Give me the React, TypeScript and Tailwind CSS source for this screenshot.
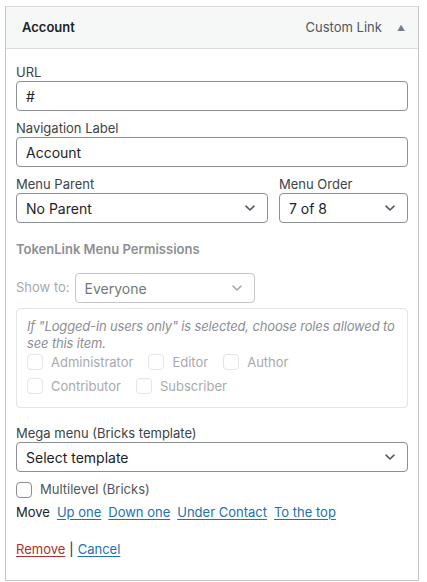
import type { ReactNode } from "react";

function Chevron({ color = "#50575e" }: { color?: string }) {
  return (
    <svg width="12" height="12" viewBox="0 0 12 12" fill="none">
      <path d="M2 4.2 6 8l4-3.8" stroke={color} strokeWidth="1.6" strokeLinecap="round" strokeLinejoin="round" />
    </svg>
  );
}

function FakeSelect({ value, className = "", muted = false }: { value: string; className?: string; muted?: boolean }) {
  return (
    <div
      className={`h-[30px] flex items-center justify-between pl-[9px] pr-[11px] rounded-[4px] border text-[14px] ${
        muted ? "border-[#c3c4c7] text-[#72777c]" : "border-[#8c8f94] text-[#1d2327]"
      } ${className}`}
    >
      <span>{value}</span>
      <Chevron color={muted ? "#a7aaad" : "#50575e"} />
    </div>
  );
}

function Label({ children }: { children: ReactNode }) {
  return <div className="h-[18px] leading-[18px] text-[13px] text-[#3c434a]">{children}</div>;
}

function RoleBox({ label }: { label: string }) {
  return (
    <label className="flex items-center gap-2 h-4 leading-4">
      <span className="w-4 h-4 rounded-[4px] border border-[#e2e4e7] bg-white" />
      <span>{label}</span>
    </label>
  );
}

function MoveLink({ children }: { children: ReactNode }) {
  return <a className="text-[#2271b1] underline underline-offset-2 cursor-pointer">{children}</a>;
}

export default function App() {
  return (
    <div className="min-h-screen bg-white pt-[6px] pl-[5px] pr-[8px] text-[13px]" style={{ fontFamily: "Inter, 'Liberation Sans', sans-serif" }}>
      <div className="border border-[#c3c4c7] border-t-[#dcdcde] w-[414px]">
        <div className="h-[42px] bg-[#f6f7f7] border-b border-[#dcdcde] flex items-center justify-between pl-[16px] pr-[13px]">
          <span className="font-semibold text-[#1d2327]">Account</span>
          <div className="flex items-center gap-[15px] text-[#50575e]">
            <span>Custom Link</span>
            <span className="text-[8px] text-[#787c82]">▲</span>
          </div>
        </div>

        <div className="px-[10px] pt-[14px] pb-[20px]">
          <Label>URL</Label>
          <input readOnly defaultValue="#" className="w-full h-[30px] px-[9px] rounded-[4px] border border-[#8c8f94] text-[14px] text-[#1d2327] outline-none" />

          <div className="mt-[8px]">
            <Label>Navigation Label</Label>
            <input readOnly defaultValue="Account" className="w-full h-[30px] px-[9px] rounded-[4px] border border-[#8c8f94] text-[14px] text-[#1d2327] outline-none" />
          </div>

          <div className="mt-[8px] flex gap-[11px]">
            <div className="w-[252px]">
              <Label>Menu Parent</Label>
              <FakeSelect value="No Parent" />
            </div>
            <div className="flex-1">
              <Label>Menu Order</Label>
              <FakeSelect value="7 of 8" />
            </div>
          </div>

          <div className="mt-[17px] h-[18px] leading-[18px] font-semibold text-[#8c8f94]">TokenLink Menu Permissions</div>

          <div className="mt-[15px] flex items-center gap-[5px]">
            <span className="text-[#a7aaad]">Show to:</span>
            <FakeSelect value="Everyone" muted className="w-[180px]" />
          </div>

          <div className="mt-[5px] border border-[#e2e4e7] rounded-[4px] pl-[10px] pr-[4px] pt-[9px] pb-[13px] text-[#a7aaad]">
            <p className="italic leading-[17px] text-[#8c8f94] whitespace-nowrap tracking-[-0.15px]">
              If "Logged-in users only" is selected, choose roles allowed to
              <br />
              see this item.
            </p>
            <div className="mt-[2px] flex flex-col gap-[8px]">
              <div className="flex gap-[15px]">
                <RoleBox label="Administrator" />
                <RoleBox label="Editor" />
                <RoleBox label="Author" />
              </div>
              <div className="flex gap-[15px]">
                <RoleBox label="Contributor" />
                <RoleBox label="Subscriber" />
              </div>
            </div>
          </div>

          <div className="mt-[16px]">
            <Label>Mega menu (Bricks template)</Label>
            <FakeSelect value="Select template" />
          </div>

          <label className="mt-[8px] flex items-center gap-[8px] text-[#50575e]">
            <span className="w-4 h-4 rounded-[4px] border border-[#8c8f94] bg-white" />
            <span>Multilevel (Bricks)</span>
          </label>

          <div className="mt-[3px] flex items-center gap-[7px] text-[#1d2327]">
            <span>Move</span>
            <MoveLink>Up one</MoveLink>
            <MoveLink>Down one</MoveLink>
            <MoveLink>Under Contact</MoveLink>
            <MoveLink>To the top</MoveLink>
          </div>

          <div className="mt-[18px] flex items-center gap-[4px] text-[#1d2327]">
            <a className="text-[#b32d2e] underline underline-offset-2 cursor-pointer">Remove</a>
            <span>|</span>
            <a className="text-[#2271b1] underline underline-offset-2 cursor-pointer">Cancel</a>
          </div>
        </div>
      </div>
    </div>
  );
}
